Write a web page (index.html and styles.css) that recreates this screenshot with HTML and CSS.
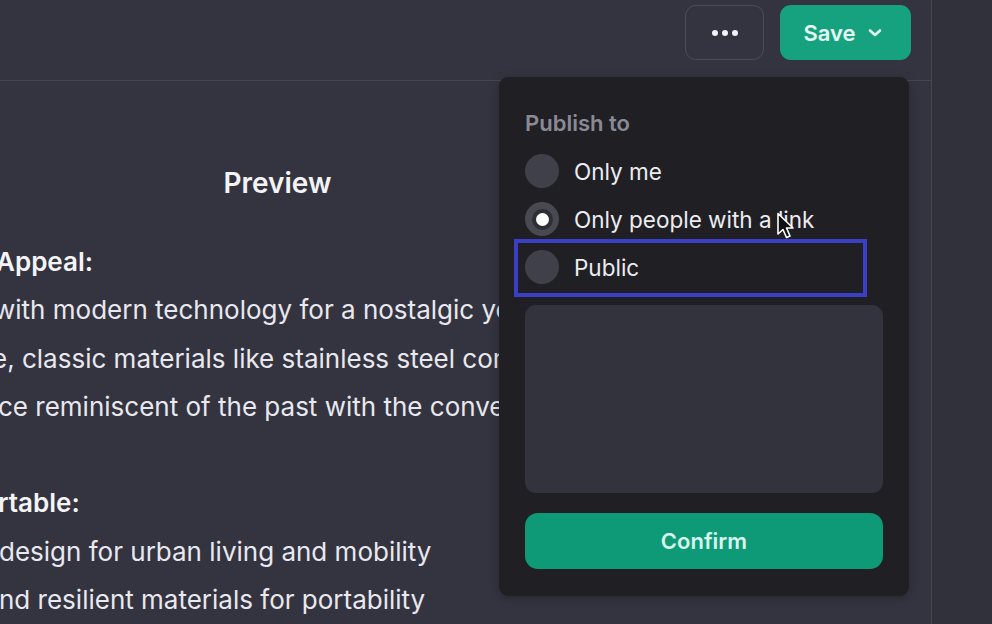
FILE: index.html
```html
<!DOCTYPE html>
<html lang="en">
<head>
<meta charset="utf-8">
<title>Preview</title>
<link rel="stylesheet" href="styles.css">
</head>
<body>
<div class="app">
  <div class="main">
    <header class="topbar">
      <div class="actions">
        <button class="btn-more" aria-label="More">
          <span class="dot"></span><span class="dot"></span><span class="dot"></span>
        </button>
        <button class="btn-save">
          <span>Save</span>
          <svg class="chev" width="14" height="10" viewBox="0 0 14 10"><path d="M2 2.5 L7 7 L12 2.5" fill="none" stroke="currentColor" stroke-width="2.6" stroke-linecap="round" stroke-linejoin="round"/></svg>
        </button>
      </div>
    </header>
    <div class="content">
      <section class="preview">
        <h2 class="preview-title">Preview</h2>
        <p class="line bold shift3">Appeal:</p>
        <p class="line shift4">with modern technology for a nostalgic yet functional feel</p>
        <p class="line shift6">e, classic materials like stainless steel complement</p>
        <p class="line shift2">ce reminiscent of the past with the convenience of today</p>
        <p class="line blank">&nbsp;</p>
        <p class="line bold shift2">rtable:</p>
        <p class="line shift1">design for urban living and mobility</p>
        <p class="line shift1">nd resilient materials for portability</p>
      </section>
    </div>

    <div class="popover">
      <div class="pop-label">Publish to</div>
      <div class="option"><span class="radio"></span><span class="opt-text">Only me</span></div>
      <div class="option"><span class="radio checked"></span><span class="opt-text">Only people with a link</span></div>
      <div class="option"><span class="radio"></span><span class="opt-text">Public</span></div>
      <div class="textbox"></div>
      <button class="btn-confirm">Confirm</button>
      <div class="highlight"></div>
      <svg class="cursor" width="20" height="28" viewBox="0 0 20 28"><path d="M2 1.5 L2 22 L7 17.5 L10.5 25.5 L14 24 L10.5 16 L17 16 Z" fill="#111" stroke="#fff" stroke-width="1.6" stroke-linejoin="round"/></svg>
    </div>
  </div>
  <aside class="side"></aside>
</div>
</body>
</html>
```

FILE: styles.css
```css
* { box-sizing: border-box; }
html, body { margin: 0; padding: 0; }
body {
  background: #32323e;
  font-family: Inter, "Noto Sans", "Liberation Sans", sans-serif;
  color: #ececf1;
  width: 992px;
  height: 624px;
  overflow: hidden;
}
.app {
  display: flex;
  height: 624px;
}
.main {
  position: relative;
  width: 932px;
  flex: none;
  background: #343440;
  border-right: 1px solid #44444f;
  display: flex;
  flex-direction: column;
}
.side {
  flex: 1;
  background: #31313c;
}
.topbar {
  height: 81px;
  flex: none;
  border-bottom: 1px solid #464652;
  display: flex;
  justify-content: flex-end;
  align-items: flex-start;
  padding: 5px 20px 0 0;
}
.actions {
  display: flex;
  gap: 16px;
}
.btn-more {
  width: 79px;
  height: 55px;
  border: 1px solid #4c4c58;
  border-radius: 11px;
  background: transparent;
  display: flex;
  align-items: center;
  justify-content: center;
  gap: 4px;
  padding: 0;
}
.dot {
  width: 6px;
  height: 6px;
  border-radius: 50%;
  background: #f1f1f6;
}
.btn-save {
  width: 131px;
  height: 55px;
  border: none;
  border-radius: 11px;
  background: #17a27f;
  color: #e6fbf3;
  font-family: inherit;
  font-size: 22px;
  font-weight: 600;
  display: flex;
  align-items: center;
  justify-content: center;
  gap: 12px;
  padding: 0 6px 0 0;
}
.chev { color: #e6fbf3; margin-top: 1px; }

.content {
  flex: 1;
  overflow: hidden;
}
.preview {
  width: 555px;
  padding-top: 78px;
}
.preview-title {
  margin: 0 0 31px 0;
  text-align: center;
  font-size: 28px;
  font-weight: 600;
  line-height: 48px;
  color: #f4f4f7;
}
.line {
  margin: 0;
  font-size: 26px;
  line-height: 48.3px;
  white-space: nowrap;
  color: #e8e8ee;
}
.bold { font-weight: 600; color: #f4f4f7; }
.shift1 { margin-left: -1px; }
.shift2 { margin-left: -2px; }
.shift3 { margin-left: -4px; }
.shift4 { margin-left: -6px; }
.shift6 { margin-left: -8px; }

.popover {
  position: absolute;
  left: 499px;
  top: 77px;
  width: 410px;
  height: 519px;
  background: #202024;
  border-radius: 9px;
  padding: 26px 26px 27px 26px;
  display: flex;
  flex-direction: column;
  box-shadow: 0 2px 10px rgba(0,0,0,0.25);
}
.pop-label {
  height: 40px;
  line-height: 40px;
  font-size: 22px;
  font-weight: 600;
  color: #8a8a96;
  margin-bottom: 4px;
}
.option {
  height: 48px;
  display: flex;
  align-items: center;
  gap: 15px;
}
.radio {
  width: 34px;
  height: 34px;
  border-radius: 50%;
  background: #40404a;
  flex: none;
  display: flex;
  align-items: center;
  justify-content: center;
}
.radio.checked {
  background: #494952;
}
.radio.checked::after {
  content: "";
  width: 13px;
  height: 13px;
  border-radius: 50%;
  background: #ffffff;
  box-shadow: 0 0 0 4px #2e2e35;
}
.opt-text {
  font-size: 22.5px;
  color: #ececf1;
}
.textbox {
  margin-top: 14px;
  height: 188px;
  background: #33333e;
  border-radius: 11px;
}
.btn-confirm {
  margin-top: 20px;
  height: 56px;
  border: none;
  border-radius: 13px;
  background: #0e9a77;
  color: #d8f5ec;
  font-family: inherit;
  font-size: 22px;
  font-weight: 600;
}
.highlight {
  position: absolute;
  left: 15px;
  top: 162px;
  width: 353px;
  height: 58px;
  border: 4px solid #3a3fc6;
  pointer-events: none;
}
.cursor {
  position: absolute;
  left: 277px;
  top: 135px;
}
```
